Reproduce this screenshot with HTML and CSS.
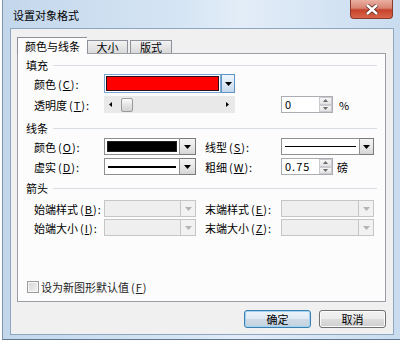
FILE: index.html
```html
<!DOCTYPE html>
<html lang="zh-CN">
<head>
  <meta charset="UTF-8">
  <title>设置对象格式</title>
  <link rel="stylesheet" href="styles.css">
</head>
<body>
  <div class="window">
    <div class="titlebar">
      <span class="title">设置对象格式</span>
      <div class="close">
        <svg width="14" height="11" viewBox="0 0 14 11"><path d="M2 1 L12 10 M12 1 L2 10" stroke="#5a2a20" stroke-width="4"/><path d="M2 1 L12 10 M12 1 L2 10" stroke="#fff" stroke-width="2.4"/></svg>
      </div>
    </div>
    <div class="client">
      <div class="tabs">
        <div class="tab active">颜色与线条</div>
        <div class="tab">大小</div>
        <div class="tab second">版式</div>
      </div>
      <div class="panel">
        <div class="group-title">填充</div>
        <div class="row tall">
          <span class="lbl">颜色<span class="key">(<u>C</u>):</span></span>
          <div class="combo c-wide focus">
            <div class="field"><div class="swatch red"></div></div>
            <span class="drop"><svg width="7" height="4"><polygon points="0,0 7,0 3.5,4" fill="#000"/></svg></span>
          </div>
        </div>
        <div class="row">
          <span class="lbl">透明度<span class="key">(<u>T</u>):</span></span>
          <div class="slider">
            <svg width="3" height="5"><polygon points="3,0 3,5 0,2.5" fill="#000"/></svg>
            <span class="thumb"></span>
            <svg class="right-arrow" width="3" height="5"><polygon points="0,0 0,5 3,2.5" fill="#000"/></svg>
          </div>
          <span class="gap2"></span>
          <div class="spin"><span class="val">0</span><span class="spin-btns"><span><svg width="5" height="3"><polygon points="0,3 5,3 2.5,0" fill="#6a6a6a"/></svg></span><span><svg width="5" height="3"><polygon points="0,0 5,0 2.5,3" fill="#6a6a6a"/></svg></span></span></div>
          <span class="unit">%</span>
        </div>

        <div class="group-title g2">线条</div>
        <div class="row">
          <span class="lbl">颜色<span class="key">(<u>O</u>):</span></span>
          <div class="combo c-mid">
            <div class="field"><div class="swatch black"></div></div>
            <span class="drop"><svg width="7" height="4"><polygon points="0,0 7,0 3.5,4" fill="#000"/></svg></span>
          </div>
          <span class="lbl2">线型<span class="key">(<u>S</u>):</span></span>
          <div class="combo c-right">
            <div class="field line"><span class="stroke thin"></span></div>
            <span class="drop"><svg width="7" height="4"><polygon points="0,0 7,0 3.5,4" fill="#000"/></svg></span>
          </div>
        </div>
        <div class="row">
          <span class="lbl">虚实<span class="key">(<u>D</u>):</span></span>
          <div class="combo c-mid">
            <div class="field line"><span class="stroke thick"></span></div>
            <span class="drop"><svg width="7" height="4"><polygon points="0,0 7,0 3.5,4" fill="#000"/></svg></span>
          </div>
          <span class="lbl2">粗细<span class="key">(<u>W</u>):</span></span>
          <div class="spin"><span class="val">0.75</span><span class="spin-btns"><span><svg width="5" height="3"><polygon points="0,3 5,3 2.5,0" fill="#6a6a6a"/></svg></span><span><svg width="5" height="3"><polygon points="0,0 5,0 2.5,3" fill="#6a6a6a"/></svg></span></span></div>
          <span class="unit pt">磅</span>
        </div>

        <div class="group-title g3">箭头</div>
        <div class="row r5">
          <span class="lbl">始端样式<span class="key">(<u>B</u>):</span></span>
          <div class="combo c-mid disabled">
            <div class="field"></div>
            <span class="drop"><svg width="7" height="4"><polygon points="0,0 7,0 3.5,4" fill="#b4b4b4"/></svg></span>
          </div>
          <span class="lbl2">末端样式<span class="key">(<u>E</u>):</span></span>
          <div class="combo c-right disabled">
            <div class="field"></div>
            <span class="drop"><svg width="7" height="4"><polygon points="0,0 7,0 3.5,4" fill="#b4b4b4"/></svg></span>
          </div>
        </div>
        <div class="row r2">
          <span class="lbl">始端大小<span class="key">(<u>I</u>):</span></span>
          <div class="combo c-mid disabled">
            <div class="field"></div>
            <span class="drop"><svg width="7" height="4"><polygon points="0,0 7,0 3.5,4" fill="#b4b4b4"/></svg></span>
          </div>
          <span class="lbl2">末端大小<span class="key">(<u>Z</u>):</span></span>
          <div class="combo c-right disabled">
            <div class="field"></div>
            <span class="drop"><svg width="7" height="4"><polygon points="0,0 7,0 3.5,4" fill="#b4b4b4"/></svg></span>
          </div>
        </div>

        <div class="checkrow">
          <span class="checkbox"></span>
          <span>设为新图形默认值<span class="key">(<u>F</u>)</span></span>
        </div>
      </div>
      <div class="buttons">
        <button class="btn default">确定</button>
        <button class="btn">取消</button>
      </div>
    </div>
  </div>
</body>
</html>
```

FILE: styles.css
```css
body {
  margin: 0;
  background: #fff;
  font-family: "Noto Sans CJK SC", "Liberation Sans", sans-serif;
  font-size: 11px;
  color: #000;
}
.window {
  margin-left: 2px;
  width: 398px;
  height: 340px;
  box-sizing: border-box;
  border-left: 1px solid #7f95ad;
  border-bottom: 1px solid #5f7590;
  background: linear-gradient(to right, #c3d7ec, #d6e5f4 45%, #e3edf8 60%, #c9dcef);
  padding: 0 6px 4px 7px;
  display: flex;
  flex-direction: column;
}
.titlebar {
  height: 28px;
  display: flex;
  justify-content: space-between;
  align-items: flex-start;
}
.title {
  padding: 7px 0 0 3px;
  line-height: 16px;
}
.close {
  width: 43px;
  height: 19px;
  margin-right: 1px;
  box-sizing: border-box;
  border: 1px solid #8a3a2c;
  border-top: none;
  border-radius: 0 0 4px 4px;
  background: linear-gradient(#eab0a2, #d98473 45%, #c5432c 55%, #d9664a);
  display: flex;
  align-items: center;
  justify-content: center;
}
.client {
  flex: 1;
  border: 1px solid #8ea6bf;
  background: #f0f0f0;
  padding: 8px 7px 0 6px;
  display: flex;
  flex-direction: column;
}
.tabs {
  height: 16px;
  display: flex;
  align-items: flex-end;
}
.tab {
  width: 41px;
  height: 13px;
  box-sizing: border-box;
  border: 1px solid #8d9199;
  border-bottom: none;
  background: linear-gradient(#f2f2f2, #e6e6e6 50%, #d9d9d9);
  line-height: 12px;
  text-align: center;
}
.tab.second {
  margin-left: 2px;
  width: 42px;
}
.tab.active {
  width: 70px;
  height: 17px;
  margin-bottom: -1px;
  background: #fcfcfc;
  border-right: none;
  position: relative;
  z-index: 1;
  line-height: 16px;
}
.panel {
  height: 249px;
  box-sizing: border-box;
  border: 1px solid #9a9ea5;
  background: #fcfcfc;
  padding: 4px 8px 0 8px;
  display: flex;
  flex-direction: column;
}
.group-title {
  height: 14px;
  display: flex;
  align-items: center;
  gap: 5px;
  line-height: 14px;
}
.group-title::after {
  content: "";
  flex: 1;
  height: 1px;
  background: #d8dee4;
}
.group-title.g2 { margin-top: 8px; }
.group-title.g3 { margin-top: 6px; }
.row {
  height: 17px;
  margin-top: 3px;
  padding-left: 8px;
  display: flex;
  align-items: center;
}
.row.tall {
  height: 19px;
  margin-top: 2px;
}
.row.r5 { margin-top: 5px; }
.row.r2 { margin-top: 2px; }
.lbl {
  width: 70px;
  flex-shrink: 0;
  white-space: nowrap;
}
.lbl2 {
  width: 76px;
  margin-left: 9px;
  flex-shrink: 0;
  white-space: nowrap;
}
.key {
  margin-left: 2px;
  letter-spacing: 1px;
}
.combo {
  height: 100%;
  display: flex;
  flex-shrink: 0;
}
.c-wide { width: 131px; }
.c-mid { width: 92px; }
.c-right { width: 93px; }
.field {
  flex: 1;
  box-sizing: border-box;
  border: 1px solid #8e8f8f;
  background: #fff;
  padding: 2px;
  display: flex;
}
.swatch {
  flex: 1;
  box-sizing: border-box;
  border: 1px solid #222;
}
.swatch.red { background: #ff0000; border-color: #2a1020; }
.swatch.black { background: #000; }
.focus .field {
  border-color: #7aa7d4;
  padding: 1px;
}
.field.line {
  align-items: center;
  padding: 0 3px;
}
.stroke {
  flex: 1;
  background: #000;
}
.stroke.thin { height: 1px; }
.stroke.thick { height: 2px; }
.drop {
  width: 16px;
  box-sizing: border-box;
  border: 1px solid #7a7a7a;
  border-left: none;
  background: linear-gradient(#f4f4f4, #e8e8e8 50%, #d6d6d6);
  display: flex;
  align-items: center;
  justify-content: center;
}
.c-wide .drop { width: 14px; border: 1px solid #5f93c6; background: linear-gradient(#eef6fc, #dce9f5 50%, #c4d8ec); }
.c-right .drop { width: 14px; }
.disabled .field {
  background: #efefef;
  border-color: #c6c6c6;
}
.disabled .drop {
  width: 15px;
  border-color: #c6c6c6;
  background: #f2f2f2;
}
.slider {
  width: 131px;
  height: 100%;
  box-sizing: border-box;
  background: #e9e9e9;
  display: flex;
  align-items: center;
  padding: 0 6px 0 5px;
  flex-shrink: 0;
}
.thumb {
  width: 12px;
  height: 14px;
  margin-left: 9px;
  box-sizing: border-box;
  border: 1px solid #9a9a9a;
  border-radius: 2px;
  background: linear-gradient(#fbfbfb, #e4e4e4 50%, #d2d2d2);
}
.right-arrow { margin-left: auto; }
.gap2 { width: 46px; flex-shrink: 0; }
.spin {
  width: 52px;
  height: 100%;
  box-sizing: border-box;
  border: 1px solid #abadb3;
  background: #fff;
  display: flex;
  flex-shrink: 0;
}
.val {
  flex: 1;
  padding-left: 3px;
  line-height: 15px;
  letter-spacing: 1px;
}
.spin-btns {
  width: 13px;
  display: flex;
  flex-direction: column;
}
.spin-btns span {
  flex: 1;
  box-sizing: border-box;
  border: 1px solid #c9cbcf;
  background: linear-gradient(#f6f6f6, #e3e3e3);
  display: flex;
  align-items: center;
  justify-content: center;
}
.unit { margin-left: 6px; }
.unit.pt { margin-left: 4px; }
.checkrow {
  margin-top: auto;
  margin-bottom: 8px;
  height: 12px;
  display: flex;
  align-items: center;
  gap: 2px;
  padding-left: 1px;
  color: #222;
}
.checkbox {
  width: 12px;
  height: 12px;
  box-sizing: border-box;
  border: 1px solid #9b9b9b;
  background: linear-gradient(135deg, #d6d6d6, #f2f2f2);
  box-shadow: inset 0 0 0 1px #f8f8f8;
}
.buttons {
  margin-top: 8px;
  display: flex;
  justify-content: flex-end;
  gap: 8px;
}
.btn {
  width: 67px;
  height: 18px;
  padding: 0;
  font: inherit;
  color: #000;
  border: 1px solid #707070;
  border-radius: 3px;
  background: linear-gradient(#f2f2f2, #ebebeb 50%, #dddddd 51%, #cfcfcf);
  box-shadow: inset 0 0 0 1px #fbfbfb;
}
.btn.default {
  border-color: #3c7fb1;
  background: linear-gradient(#edf4fa, #dfe9f2 50%, #cfdbe6 51%, #c2d2df);
  box-shadow: inset 0 0 0 1px #9fd3f1;
}
```
